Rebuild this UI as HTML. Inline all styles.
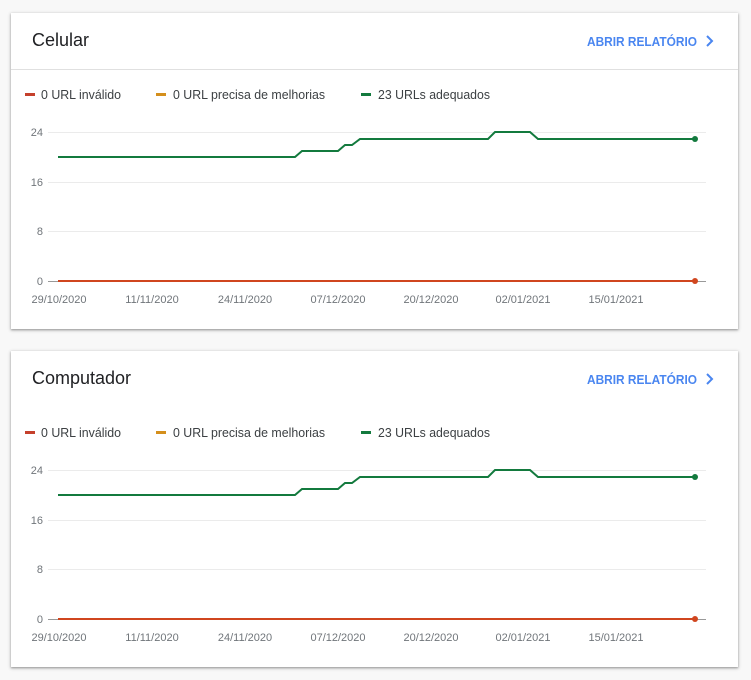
<!DOCTYPE html>
<html><head><meta charset="utf-8"><style>
body{margin:0;background:#f8f8f8;width:751px;height:680px;position:relative;overflow:hidden;font-family:"Liberation Sans",Arial,sans-serif}
.card{position:absolute;left:11px;width:727px;height:316px;background:#fff;box-shadow:0 1px 2px rgba(0,0,0,.3),0 1px 3px 1px rgba(0,0,0,.12)}
.card svg{position:absolute;left:-11px;top:-13px}
</style></head><body>
<div class="card" style="top:13px">
<svg width="751" height="330" viewBox="0 0 751 330" font-family="Liberation Sans, Arial, sans-serif">
<text x="32" y="46" font-size="18" fill="#202124">Celular</text>
<text x="587" y="46" font-size="13" font-weight="bold" fill="#4a86f0" textLength="110" lengthAdjust="spacingAndGlyphs">ABRIR RELATÓRIO</text>
<path d="M707 36l5 5-5 5" stroke="#4a86f0" stroke-width="2" fill="none"/>
<line x1="11" y1="69.5" x2="738" y2="69.5" stroke="#e0e0e0"/>
<g font-size="12.5" fill="#3c4043">
<rect x="25" y="93" width="10" height="3" fill="#c5402c"/><text x="41" y="99" textLength="80" lengthAdjust="spacingAndGlyphs">0 URL inválido</text>
<rect x="156" y="93" width="10" height="3" fill="#d48f1c"/><text x="173" y="99" textLength="152" lengthAdjust="spacingAndGlyphs">0 URL precisa de melhorias</text>
<rect x="361" y="93" width="10" height="3" fill="#137a3e"/><text x="378" y="99" textLength="112" lengthAdjust="spacingAndGlyphs">23 URLs adequados</text>
</g>
<g stroke="#ebebeb"><line x1="48" y1="132.5" x2="706" y2="132.5"/><line x1="48" y1="182.5" x2="706" y2="182.5"/><line x1="48" y1="231.5" x2="706" y2="231.5"/></g>
<line x1="48" y1="281.5" x2="706" y2="281.5" stroke="#999"/>
<g font-size="11" fill="#70757a" text-anchor="end"><text x="43" y="136">24</text><text x="43" y="186">16</text><text x="43" y="235">8</text><text x="43" y="285">0</text></g>
<g font-size="11" fill="#70757a" text-anchor="middle"><text x="59" y="303">29/10/2020</text><text x="152" y="303">11/11/2020</text><text x="245" y="303">24/11/2020</text><text x="338" y="303">07/12/2020</text><text x="431" y="303">20/12/2020</text><text x="523" y="303">02/01/2021</text><text x="616" y="303">15/01/2021</text></g>
<polyline points="58,157 295,157 302,151 338,151 345,145 352,145 360,139 488,139 495,132 530,132 538,139 695,139" fill="none" stroke="#137a3e" stroke-width="2"/>
<circle cx="695" cy="139" r="3" fill="#137a3e"/>
<line x1="58" y1="281" x2="695" y2="281" stroke="#d0461f" stroke-width="2"/>
<circle cx="695" cy="281" r="3" fill="#d0461f"/>
</svg></div>
<div class="card" style="top:351px">
<svg width="751" height="330" viewBox="0 0 751 330" font-family="Liberation Sans, Arial, sans-serif">
<text x="32" y="46" font-size="18" fill="#202124">Computador</text>
<text x="587" y="46" font-size="13" font-weight="bold" fill="#4a86f0" textLength="110" lengthAdjust="spacingAndGlyphs">ABRIR RELATÓRIO</text>
<path d="M707 36l5 5-5 5" stroke="#4a86f0" stroke-width="2" fill="none"/>
<g font-size="12.5" fill="#3c4043">
<rect x="25" y="93" width="10" height="3" fill="#c5402c"/><text x="41" y="99" textLength="80" lengthAdjust="spacingAndGlyphs">0 URL inválido</text>
<rect x="156" y="93" width="10" height="3" fill="#d48f1c"/><text x="173" y="99" textLength="152" lengthAdjust="spacingAndGlyphs">0 URL precisa de melhorias</text>
<rect x="361" y="93" width="10" height="3" fill="#137a3e"/><text x="378" y="99" textLength="112" lengthAdjust="spacingAndGlyphs">23 URLs adequados</text>
</g>
<g stroke="#ebebeb"><line x1="48" y1="132.5" x2="706" y2="132.5"/><line x1="48" y1="182.5" x2="706" y2="182.5"/><line x1="48" y1="231.5" x2="706" y2="231.5"/></g>
<line x1="48" y1="281.5" x2="706" y2="281.5" stroke="#999"/>
<g font-size="11" fill="#70757a" text-anchor="end"><text x="43" y="136">24</text><text x="43" y="186">16</text><text x="43" y="235">8</text><text x="43" y="285">0</text></g>
<g font-size="11" fill="#70757a" text-anchor="middle"><text x="59" y="303">29/10/2020</text><text x="152" y="303">11/11/2020</text><text x="245" y="303">24/11/2020</text><text x="338" y="303">07/12/2020</text><text x="431" y="303">20/12/2020</text><text x="523" y="303">02/01/2021</text><text x="616" y="303">15/01/2021</text></g>
<polyline points="58,157 295,157 302,151 338,151 345,145 352,145 360,139 488,139 495,132 530,132 538,139 695,139" fill="none" stroke="#137a3e" stroke-width="2"/>
<circle cx="695" cy="139" r="3" fill="#137a3e"/>
<line x1="58" y1="281" x2="695" y2="281" stroke="#d0461f" stroke-width="2"/>
<circle cx="695" cy="281" r="3" fill="#d0461f"/>
</svg></div>
</body></html>
